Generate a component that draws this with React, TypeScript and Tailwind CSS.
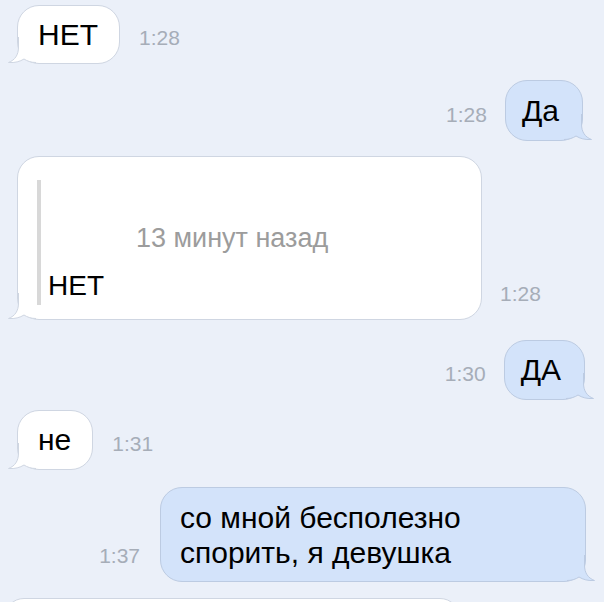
const FONT = "font-['Liberation_Sans',Arial,sans-serif]";

function Tail({ side, blue }: { side: "left" | "right"; blue?: boolean }) {
  const fill = blue ? "#d3e3fa" : "#ffffff";
  const stroke = blue ? "#bccbe2" : "#cfd6e2";
  return (
    <svg
      width="28"
      height="26"
      viewBox="0 0 28 26"
      className={
        side === "left"
          ? "absolute left-[-10px] bottom-0"
          : "absolute right-[-10px] bottom-0 -scale-x-100"
      }
    >
      <path
        d="M10.5 0 L10.5 10 C10.5 18 7 23 0.5 25.5 C7 26 12 24.5 16 22 C19 24 23 25.5 28 25.5 L28 0 Z"
        fill={fill}
      />
      <path
        d="M10.5 0 L10.5 10 C10.5 18 7 23 0.5 25.5 C7 26 12 24.5 16 22 C19 24 23 25.5 28 25.5"
        fill="none"
        stroke={stroke}
        strokeWidth="1"
      />
    </svg>
  );
}

function Time({ t }: { t: string }) {
  return <span className="text-[21px] leading-none text-[#a6adb8] mb-[16px]">{t}</span>;
}

function InBubble({ text, h }: { text: string; h: string }) {
  return (
    <div className={`relative ${h} flex items-center bg-white border border-[#cfd6e2] rounded-[22px] pl-[20px] pr-[21px]`}>
      <Tail side="left" />
      <span className="relative text-[30px] text-black leading-none">{text}</span>
    </div>
  );
}

function OutBubble({ text, h }: { text: string; h: string }) {
  return (
    <div className={`relative ${h} flex items-center bg-[#d3e3fa] border border-[#bccbe2] rounded-[22px] pl-[16px] pr-[23px]`}>
      <Tail side="right" blue />
      <span className="relative text-[30px] text-black leading-none">{text}</span>
    </div>
  );
}

export default function App() {
  return (
    <div className={`w-[604px] h-[602px] overflow-hidden bg-[#ebf0f9] ${FONT}`}>
      {/* 1 */}
      <div className="flex items-end gap-[19px] pl-[17px] pt-[5px]">
        <InBubble text="НЕТ" h="h-[59px]" />
        <Time t="1:28" />
      </div>

      {/* 2 */}
      <div className="flex items-end justify-end gap-[18px] pr-[21px] mt-[16px]">
        <Time t="1:28" />
        <OutBubble text="Да" h="h-[61px]" />
      </div>

      {/* 3 forwarded */}
      <div className="flex items-end gap-[18px] pl-[17px] mt-[15px]">
        <div className="relative w-[465px] h-[164px] bg-white border border-[#cfd6e2] rounded-[22px] pl-[19px] pt-[23px]">
          <Tail side="left" />
          <div className="relative flex h-[125px]">
            <div className="w-[4px] h-full bg-[#d8d8d8]" />
            <div className="flex flex-col pl-[7px]">
              <span className="ml-[88px] mt-[45px] text-[27px] leading-none text-[#9c9c9c]">13 минут назад</span>
              <span className="mt-[20px] text-[28px] leading-none text-black">НЕТ</span>
            </div>
          </div>
        </div>
        <Time t="1:28" />
      </div>

      {/* 4 */}
      <div className="flex items-end justify-end gap-[18px] pr-[19px] mt-[20px]">
        <Time t="1:30" />
        <OutBubble text="ДА" h="h-[60px]" />
      </div>

      {/* 5 */}
      <div className="flex items-end gap-[19px] pl-[17px] mt-[10px]">
        <InBubble text="не" h="h-[60px]" />
        <Time t="1:31" />
      </div>

      {/* 6 */}
      <div className="flex items-end justify-end gap-[20px] pr-[18px] mt-[17px]">
        <Time t="1:37" />
        <div className="relative w-[426px] h-[95px] flex items-center bg-[#d3e3fa] border border-[#bccbe2] rounded-[22px] px-[19px]">
          <Tail side="right" blue />
          <span className="relative text-[30px] leading-[35px] text-black">
            со мной бесполезно
            <br />
            спорить, я девушка
          </span>
        </div>
      </div>

      {/* 7 partial */}
      <div className="pl-[4px] mt-[16px]">
        <div className="w-[456px] h-[40px] bg-white border border-[#cfd6e2] rounded-[22px]" />
      </div>
    </div>
  );
}
